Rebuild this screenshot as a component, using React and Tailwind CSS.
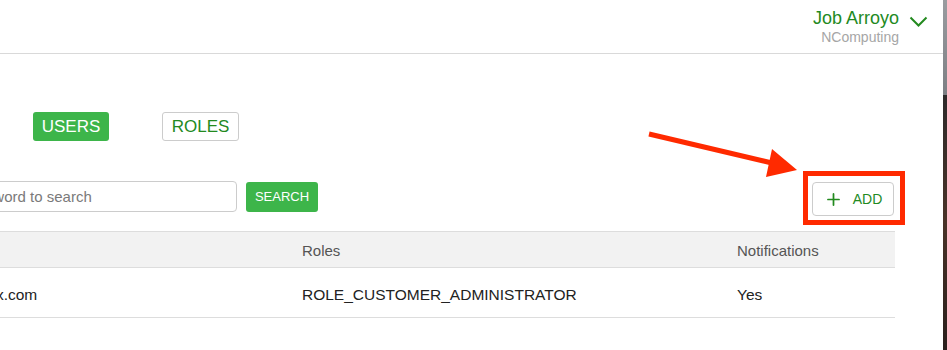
import { Plus } from 'lucide-react';

function UserMenu() {
  return (
    <div className="flex items-start">
      <div className="text-right">
        <p className="text-[18px] leading-[22px] text-[#238a1f]">Job Arroyo</p>
        <p className="text-[14px] leading-[16px] text-[#a6a6a6]">NComputing</p>
      </div>
      <svg className="ml-[10px] mt-[9px]" width="19" height="12" viewBox="0 0 19 12" fill="none">
        <path d="M1.5 1.5 L9.5 9.5 L17.5 1.5" stroke="#238a1f" strokeWidth="2" />
      </svg>
    </div>
  );
}

function Arrow() {
  return (
    <svg className="absolute left-[640px] top-[120px]" width="170" height="70" viewBox="0 0 170 70">
      <line x1="9" y1="14" x2="136" y2="44" stroke="#ff2a00" strokeWidth="5" />
      <polygon points="132,29 157,50 126,57" fill="#ff2a00" />
    </svg>
  );
}

export default function App() {
  return (
    <div className="flex w-[947px] h-[350px] overflow-hidden bg-white font-['Liberation_Sans',Arial,sans-serif]">
      <div className="relative w-[943px] overflow-hidden">
        <header className="h-[54px] border-b border-[#d9d9d9] flex justify-end pt-[7px] pr-[15px]">
          <UserMenu />
        </header>

        <div className="mt-[58px] pl-[33px] flex gap-[53px]">
          <button className="w-[76px] h-[29px] rounded-[3px] bg-[#3db54a] text-white text-[17px]">USERS</button>
          <button className="w-[77px] h-[29px] rounded-[3px] border border-[#cccccc] bg-white text-[#238a1f] text-[17px]">ROLES</button>
        </div>

        <div className="mt-[40px] flex items-start justify-between pr-[49px]">
          <div className="flex items-start">
            <input
              className="-ml-[83px] w-[320px] h-[31px] rounded-[4px] border border-[#cccccc] px-[12px] text-[15px] text-[#333] placeholder:text-[#7a7a7a] outline-none"
              placeholder="Enter keyword to search"
            />
            <button className="ml-[9px] mt-[1px] w-[72px] h-[30px] rounded-[3px] bg-[#3db54a] text-white text-[13px]">SEARCH</button>
          </div>
          <div className="relative mt-[1px]">
            <button className="w-[82px] h-[34px] rounded-[4px] border border-[#cccccc] bg-white flex items-center justify-center gap-[10px] text-[#238a1f] text-[14px]">
              <Plus size={19} strokeWidth={2.2} />
              <span>ADD</span>
            </button>
            <div className="absolute -left-[9px] -right-[11px] -top-[11px] -bottom-[9px] border-[5px] border-[#ff2a00]"></div>
          </div>
        </div>

        <div className="mt-[15px] -ml-[118px] w-[1013px]">
          <div className="grid grid-cols-[408px_435px_170px] h-[37px] items-center pt-[3px] bg-[#f2f2f2] border-y border-[#dddddd] text-[15px] text-[#555555]">
            <span className="px-[12px]">Email</span>
            <span className="px-[12px]">Roles</span>
            <span className="px-[12px]">Notifications</span>
          </div>
          <div className="grid grid-cols-[408px_435px_170px] h-[50px] items-center pt-[4px] border-b border-[#dddddd] text-[15.5px] text-[#222222]">
            <span className="px-[12px]">job.arroyo@box.com</span>
            <span className="px-[12px]">ROLE_CUSTOMER_ADMINISTRATOR</span>
            <span className="px-[12px]">Yes</span>
          </div>
        </div>

        <Arrow />
      </div>
      <div className="w-[4px] flex flex-col">
        <div className="h-[95px] bg-gradient-to-b from-[#9a9ca0] to-[#7d7f84]"></div>
        <div className="flex-1 bg-gradient-to-b from-[#2e2a2a] via-[#4a3328] to-[#2a1f1c]"></div>
      </div>
    </div>
  );
}
